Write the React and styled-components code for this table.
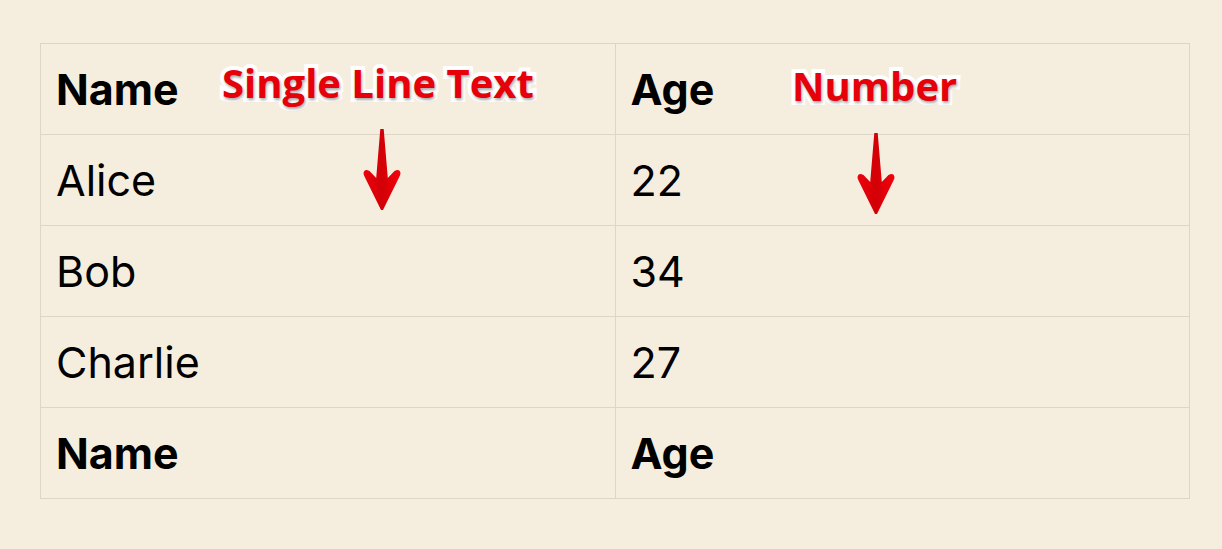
import React from "react";
import styled, { createGlobalStyle } from "styled-components";

const Global = createGlobalStyle`
 html, body {
  margin: 0;
  padding: 0;
  background: #f5eedf;
 }
 body {
  font-family: "Inter", "Liberation Sans", sans-serif;
 }
`;

const Page = styled.div`
 padding: 43px 0 0 40px;
 min-height: 549px;
 box-sizing: border-box;
`;

const Wrap = styled.div`
 position: relative;
 width: 1150px;
`;

const Table = styled.table`
 width: 1150px;
 border-collapse: collapse;
 table-layout: fixed;
 border: 1px solid #ddd5c8;
`;

const Cell = styled.td`
 height: 91px;
 padding: 0 15px;
 border: 1px solid #ddd5c8;
 font-size: 43px;
 font-weight: ${(p) => (p.$bold ? 700 : 400)};
 color: #000;
 vertical-align: middle;
 box-sizing: border-box;
`;

const Label = styled.span`
 position: absolute;
 top: ${(p) => p.$top}px;
 left: ${(p) => p.$left}px;
 font-family: "Open Sans", "Liberation Sans", sans-serif;
 font-weight: 700;
 font-size: 40px;
 line-height: 1;
 color: #e6000a;
 -webkit-text-stroke: 8px #fff;
 paint-order: stroke fill;
 text-shadow: 1px 2px 3px rgba(0, 0, 0, 0.35);
 white-space: nowrap;
`;

const ArrowBox = styled.svg`
 position: absolute;
 top: ${(p) => p.$top}px;
 left: ${(p) => p.$left}px;
`;

const Arrow = ({ top, left, id }) => (
 <ArrowBox $top={top} $left={left} width="40" height="84" viewBox="0 0 40 84">
  <defs>
   <linearGradient id={id} x1="0" x2="1" y1="0" y2="0">
    <stop offset="0" stopColor="#ee000b" />
    <stop offset="0.5" stopColor="#d20007" />
    <stop offset="1" stopColor="#f6000c" />
   </linearGradient>
  </defs>
  <path
   d="M18.3 1 L21.7 1 L25.8 50 L32.5 43 Q37.5 40 38.5 45 Q38.5 47 37 49.5 L21 82 L19 82 L3 49.5 Q1.5 47 1.5 45 Q2.5 40 7.5 43 L14.2 50 Z"
   fill={`url(#${id})`}
  />
 </ArrowBox>
);

const rows = [
 ["Name", "Age", true],
 ["Alice", "22"],
 ["Bob", "34"],
 ["Charlie", "27"],
 ["Name", "Age", true],
];

export default function App() {
 return (
  <Page>
   <Global />
   <Wrap>
    <Table>
     <tbody>
      {rows.map(([a, b, bold], i) => (
       <tr key={i}>
        <Cell $bold={bold}>{a}</Cell>
        <Cell $bold={bold}>{b}</Cell>
       </tr>
      ))}
     </tbody>
    </Table>
    <Label $top={20} $left={182}>Single Line Text</Label>
    <Label $top={23} $left={752}>Number</Label>
    <Arrow id="g1" top={85} left={322} />
    <Arrow id="g2" top={89} left={816} />
   </Wrap>
  </Page>
 );
}
